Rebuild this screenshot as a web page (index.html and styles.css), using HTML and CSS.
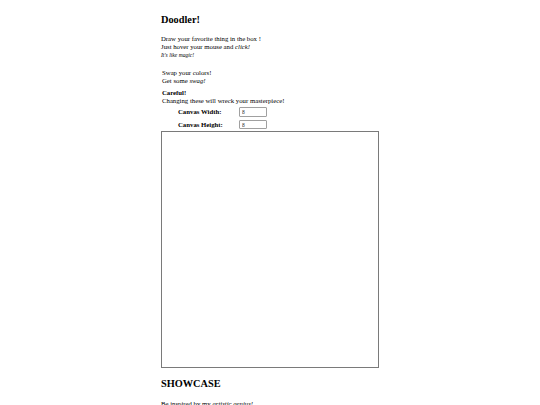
FILE: index.html
```html
<!DOCTYPE html>
<html>
<head>
<meta charset="utf-8">
<title>Doodler!</title>
<link rel="stylesheet" href="styles.css">
</head>
<body>
<div class="page">
  <h2 class="title">Doodler!</h2>
  <p class="intro">Draw your favorite thing in the box !<br>Just hover your mouse and <em>click!</em><br><small><i>It's like</i> <em>magic!</em></small></p>
  <div class="colors">Swap your colors!<br>Get some <em>swag!</em></div>
  <div class="settings">
    <b>Careful!</b><br>Changing these will wreck your masterpiece!
    <div class="dims">
      <label class="dim-label" for="w">Canvas Width:</label>
      <input class="dim-input" id="w" type="text" value="8">
      <label class="dim-label" for="h">Canvas Height:</label>
      <input class="dim-input" id="h" type="text" value="8">
    </div>
  </div>
  <div class="canvas"></div>
  <h2 class="title showcase">SHOWCASE</h2>
  <p class="inspired">Be inspired by my <em>artistic genius!</em></p>
</div>
</body>
</html>
```
FILE: styles.css
```css
html, body {
  margin: 0;
  padding: 0;
  background: #fff;
}
body {
  font-family: "Liberation Serif", "Times New Roman", serif;
  font-size: 6.75px;
  line-height: 7.6px;
  color: #000;
}
.page {
  width: 218px;
  margin: 0 auto;
  padding-top: 14px;
}
.title {
  font-size: 10.3px;
  line-height: 12px;
  font-weight: bold;
  margin: 0 0 9px 0;
}
.intro {
  margin: 0 0 10px 0;
  line-height: 8px;
}
.intro small {
  font-size: 5.6px;
}
.colors {
  padding-left: 1px;
  margin-bottom: 5px;
}
.settings {
  padding-left: 1px;
}
.dims {
  display: grid;
  grid-template-columns: 61px 28px;
  row-gap: 3px;
  align-items: center;
  padding-left: 16px;
  margin-top: 3px;
}
.dim-label {
  font-weight: bold;
}
.dim-input {
  box-sizing: border-box;
  width: 28px;
  height: 9.5px;
  margin: 0;
  padding: 0 2px;
  border: 1px solid #a0a0a0;
  border-radius: 1px;
  font-family: "Liberation Sans", Arial, sans-serif;
  font-size: 5px;
  color: #333;
  background: #fff;
}
.canvas {
  box-sizing: border-box;
  width: 218px;
  height: 237px;
  border: 1px solid #7a7a7a;
  margin-top: 2px;
}
.showcase {
  margin-top: 10px;
  margin-bottom: 10px;
}
.inspired {
  margin: 0;
}
```
